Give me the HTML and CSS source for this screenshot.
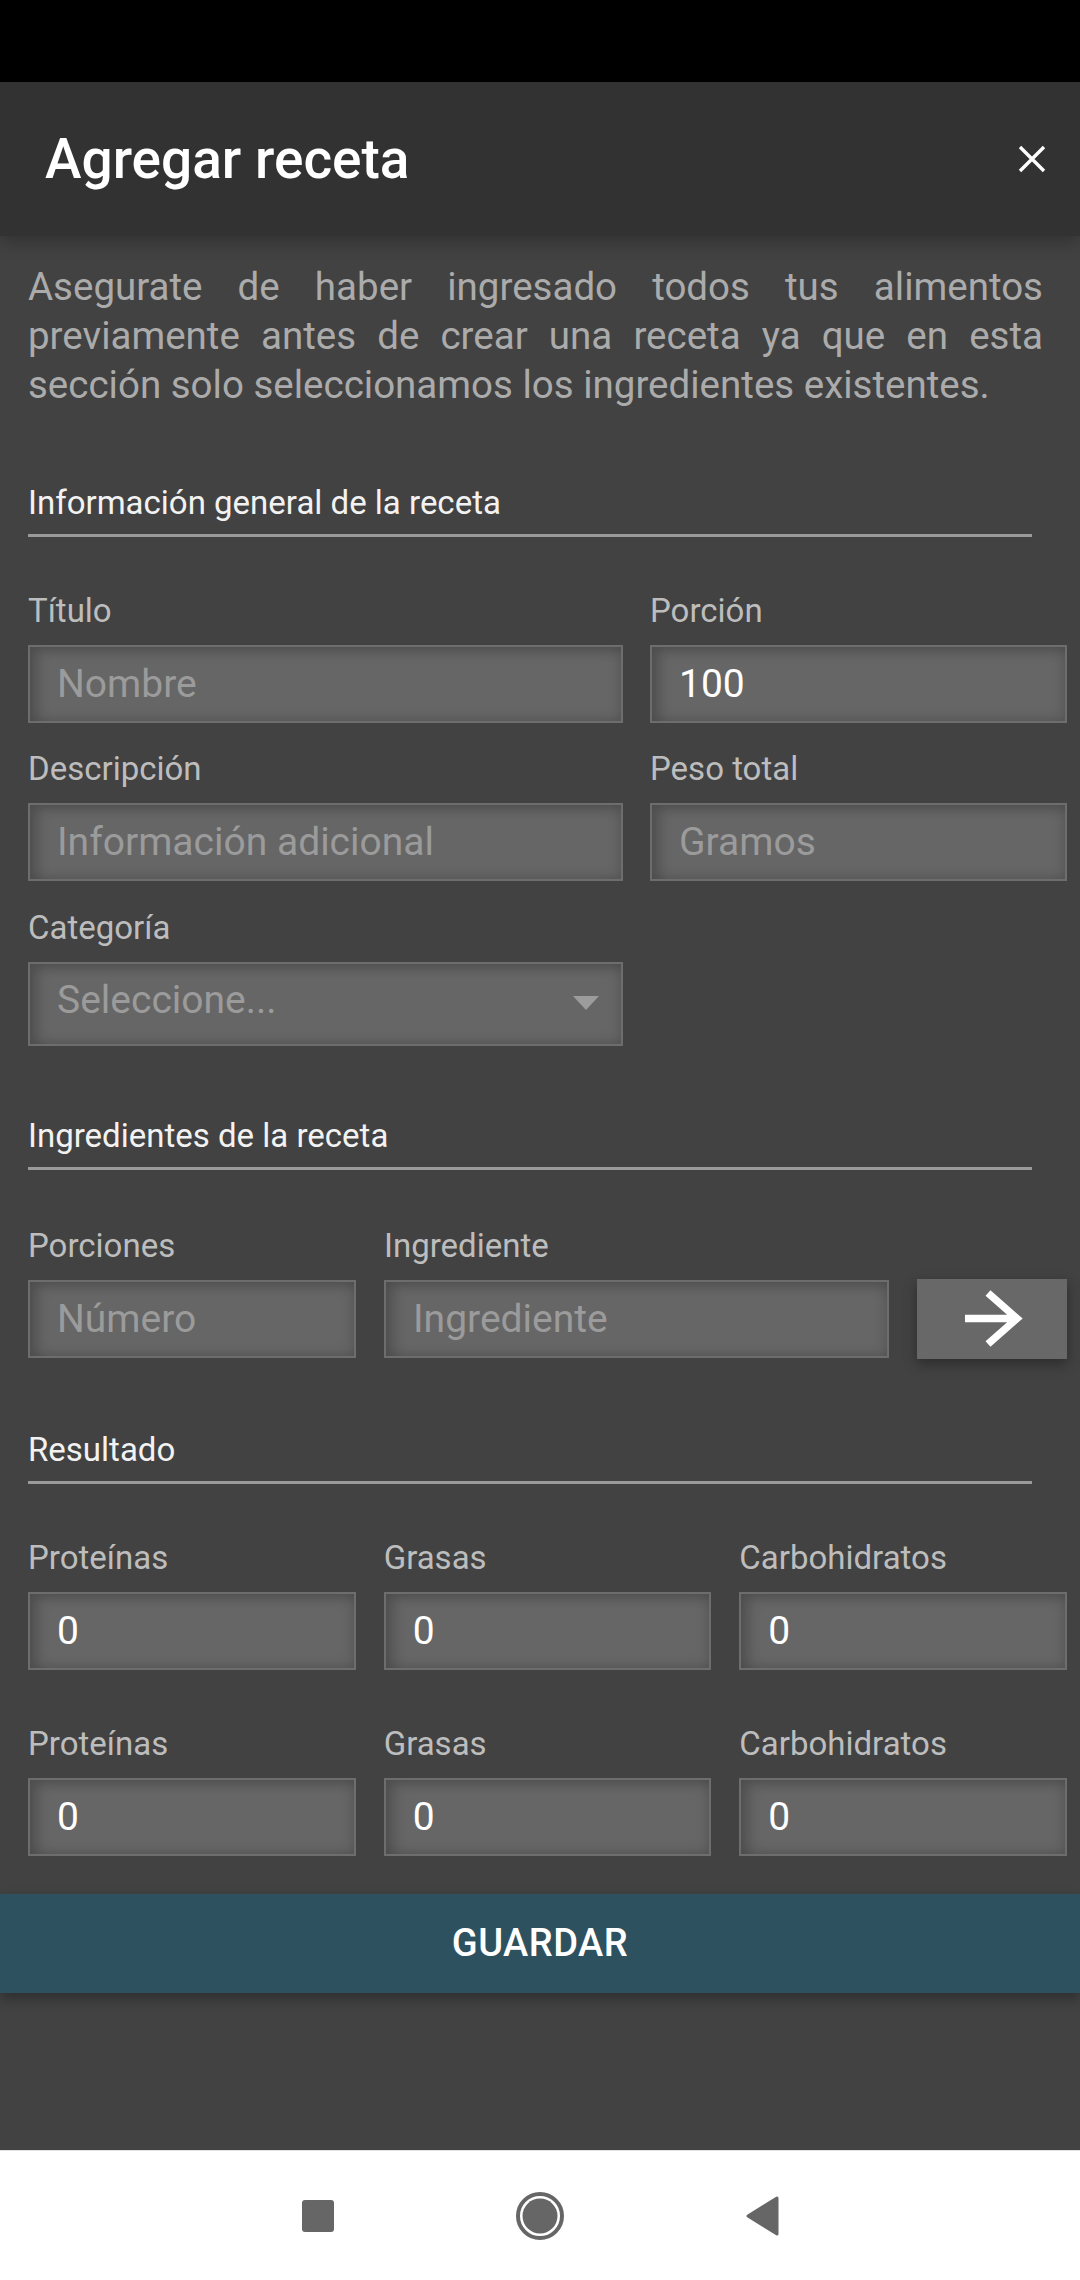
FILE: index.html
```html
<!DOCTYPE html>
<html lang="es">
<head>
<meta charset="utf-8">
<title>Agregar receta</title>
<link rel="stylesheet" href="styles.css">
</head>
<body>
<div class="screen">
  <div class="statusbar"></div>
  <header class="appbar">
    <h1 class="appbar-title">Agregar receta</h1>
    <svg class="close-icon" viewBox="0 0 28 28" aria-label="Cerrar">
      <path d="M2 2 L26 26 M26 2 L2 26" stroke="#ffffff" stroke-width="3.4" fill="none"/>
    </svg>
  </header>
  <main class="content">
    <div class="form">
      <p class="intro">Asegurate de haber ingresado todos tus alimentos previamente antes de crear una receta ya que en esta sección solo seleccionamos los ingredientes existentes.</p>

      <section class="section section-info">
        <h2 class="section-title">Información general de la receta</h2>
        <div class="grid grid-info">
          <div class="field">
            <label class="field-label">Título</label>
            <input class="field-input" type="text" placeholder="Nombre">
          </div>
          <div class="field">
            <label class="field-label">Porción</label>
            <input class="field-input" type="text" value="100">
          </div>
          <div class="field">
            <label class="field-label">Descripción</label>
            <input class="field-input" type="text" placeholder="Información adicional">
          </div>
          <div class="field">
            <label class="field-label">Peso total</label>
            <input class="field-input" type="text" placeholder="Gramos">
          </div>
          <div class="field">
            <label class="field-label">Categoría</label>
            <div class="field-select">
              <span class="select-text">Seleccione...</span>
              <svg class="select-arrow" viewBox="0 0 26 14"><polygon points="0,0 26,0 13,14" fill="#9c9c9c"/></svg>
            </div>
          </div>
        </div>
      </section>

      <section class="section section-ingredients">
        <h2 class="section-title">Ingredientes de la receta</h2>
        <div class="grid grid-ingredients">
          <div class="field">
            <label class="field-label">Porciones</label>
            <input class="field-input" type="text" placeholder="Número">
          </div>
          <div class="field">
            <label class="field-label">Ingrediente</label>
            <input class="field-input" type="text" placeholder="Ingrediente">
          </div>
          <button class="add-btn" type="button" aria-label="Agregar">
            <svg class="add-icon" viewBox="0 0 60 58">
              <path d="M2 28.5 H53 M25 3 L54 28.5 L25 54" stroke="#ffffff" stroke-width="7.5" fill="none" stroke-linejoin="miter"/>
            </svg>
          </button>
        </div>
      </section>

      <section class="section section-result">
        <h2 class="section-title">Resultado</h2>
        <div class="grid grid-result">
          <div class="field">
            <label class="field-label">Proteínas</label>
            <input class="field-input" type="text" value="0">
          </div>
          <div class="field">
            <label class="field-label">Grasas</label>
            <input class="field-input" type="text" value="0">
          </div>
          <div class="field">
            <label class="field-label">Carbohidratos</label>
            <input class="field-input" type="text" value="0">
          </div>
          <div class="field">
            <label class="field-label">Proteínas</label>
            <input class="field-input" type="text" value="0">
          </div>
          <div class="field">
            <label class="field-label">Grasas</label>
            <input class="field-input" type="text" value="0">
          </div>
          <div class="field">
            <label class="field-label">Carbohidratos</label>
            <input class="field-input" type="text" value="0">
          </div>
        </div>
      </section>
    </div>
    <button class="save-btn" type="button">GUARDAR</button>
  </main>
  <nav class="navbar">
    <div class="nav-cell">
      <svg class="nav-icon" viewBox="0 0 32 32"><rect x="0" y="0" width="32" height="32" rx="3" fill="#666666"/></svg>
    </div>
    <div class="nav-cell">
      <svg class="nav-icon nav-home" viewBox="0 0 50 50"><circle cx="25" cy="25" r="22" stroke="#666666" stroke-width="4" fill="none"/><circle cx="25" cy="25" r="17.5" fill="#666666"/></svg>
    </div>
    <div class="nav-cell">
      <svg class="nav-icon nav-back" viewBox="0 0 34 40"><polygon points="32,2 32,38 3,20" fill="#666666" stroke="#666666" stroke-width="3" stroke-linejoin="round"/></svg>
    </div>
  </nav>
</div>
</body>
</html>
```

FILE: styles.css
```css
* {
  box-sizing: border-box;
}

html,
body {
  margin: 0;
  padding: 0;
}

body {
  width: 1080px;
  height: 2280px;
  background: #424242;
  font-family: Roboto, "Noto Sans", "Liberation Sans", sans-serif;
  overflow: hidden;
}

.screen {
  display: flex;
  flex-direction: column;
  height: 2280px;
}

.statusbar {
  flex: none;
  height: 82px;
  background: #000000;
}

.appbar {
  flex: none;
  height: 154px;
  background: #323232;
  display: flex;
  align-items: center;
  justify-content: space-between;
  padding: 0 34px 0 45px;
  position: relative;
  z-index: 2;
  box-shadow: 0 6px 16px rgba(0, 0, 0, 0.25);
}

.appbar-title {
  margin: 0;
  font-size: 55px;
  font-weight: 500;
  line-height: 66px;
  color: #ffffff;
}

.close-icon {
  width: 28px;
  height: 28px;
}

.content {
  flex: 1;
  display: flex;
  flex-direction: column;
}

.form {
  padding: 26px 13px 0 28px;
}

.intro {
  margin: 0 24px 0 0;
  font-size: 38.5px;
  line-height: 49px;
  color: #ababab;
  text-align: justify;
}

.section-title {
  margin: 0 35px 0 0;
  padding-bottom: 10.5px;
  border-bottom: 3px solid #9a9a9a;
  font-size: 33px;
  font-weight: 400;
  line-height: 40px;
  color: #f2f2f2;
}

.section-info {
  margin-top: 74px;
}

.section-ingredients {
  margin-top: 70.5px;
}

.section-result {
  margin-top: 72.5px;
}

.grid {
  display: grid;
  margin-top: 54px;
}

.grid-info {
  grid-template-columns: 595px 1fr;
  column-gap: 27px;
  row-gap: 26.5px;
}

.grid-ingredients {
  grid-template-columns: 328px 1fr 150px;
  column-gap: 28px;
  margin-top: 56px;
}

.grid-result {
  grid-template-columns: repeat(3, 1fr);
  column-gap: 28px;
  row-gap: 54px;
}

.field {
  display: flex;
  flex-direction: column;
}

.field-label {
  font-size: 33px;
  line-height: 40px;
  color: #bdbdbd;
  margin-bottom: 14px;
}

.field-input,
.field-select {
  width: 100%;
  margin: 0;
  border: 2px solid #6d6d6d;
  border-radius: 0;
  background: #666666;
  box-shadow: inset 0 0 14px rgba(0, 0, 0, 0.2), inset 10px 5px 12px rgba(0, 0, 0, 0.12);
  font-family: inherit;
  font-size: 39px;
}

.field-input {
  display: block;
  height: 78px;
  padding: 0 0 0 27px;
  color: #ffffff;
  outline: none;
}

.field-input::placeholder {
  color: #9b9b9b;
  opacity: 1;
}

.field-select {
  height: 84px;
  display: flex;
  align-items: center;
  justify-content: space-between;
  padding: 0 22px 8px 27px;
  color: #9b9b9b;
}

.select-arrow {
  width: 26px;
  height: 14px;
  margin-top: 6px;
}

.add-btn {
  align-self: end;
  height: 80px;
  width: 150px;
  margin: 0 0 -1px 0;
  padding: 0;
  border: none;
  background: #686868;
  box-shadow: 0 5px 12px rgba(0, 0, 0, 0.35);
  display: flex;
  align-items: center;
  justify-content: center;
}

.add-icon {
  width: 60px;
  height: 58px;
  margin-left: 2px;
}

.save-btn {
  margin-top: 38px;
  height: 99px;
  width: 100%;
  border: none;
  padding: 0;
  background: #2e5160;
  color: #ffffff;
  font-family: inherit;
  font-size: 38px;
  font-weight: 500;
  letter-spacing: 0.5px;
  box-shadow: 0 6px 12px rgba(0, 0, 0, 0.3);
}

.navbar {
  flex: none;
  height: 130px;
  background: #ffffff;
  border-top: 1px solid #e2e2e2;
  display: flex;
  justify-content: center;
  align-items: center;
}

.nav-cell {
  width: 222px;
  display: flex;
  justify-content: center;
  align-items: center;
}

.nav-icon {
  width: 32px;
  height: 32px;
}

.nav-home {
  width: 50px;
  height: 50px;
}

.nav-back {
  width: 34px;
  height: 40px;
}
```
